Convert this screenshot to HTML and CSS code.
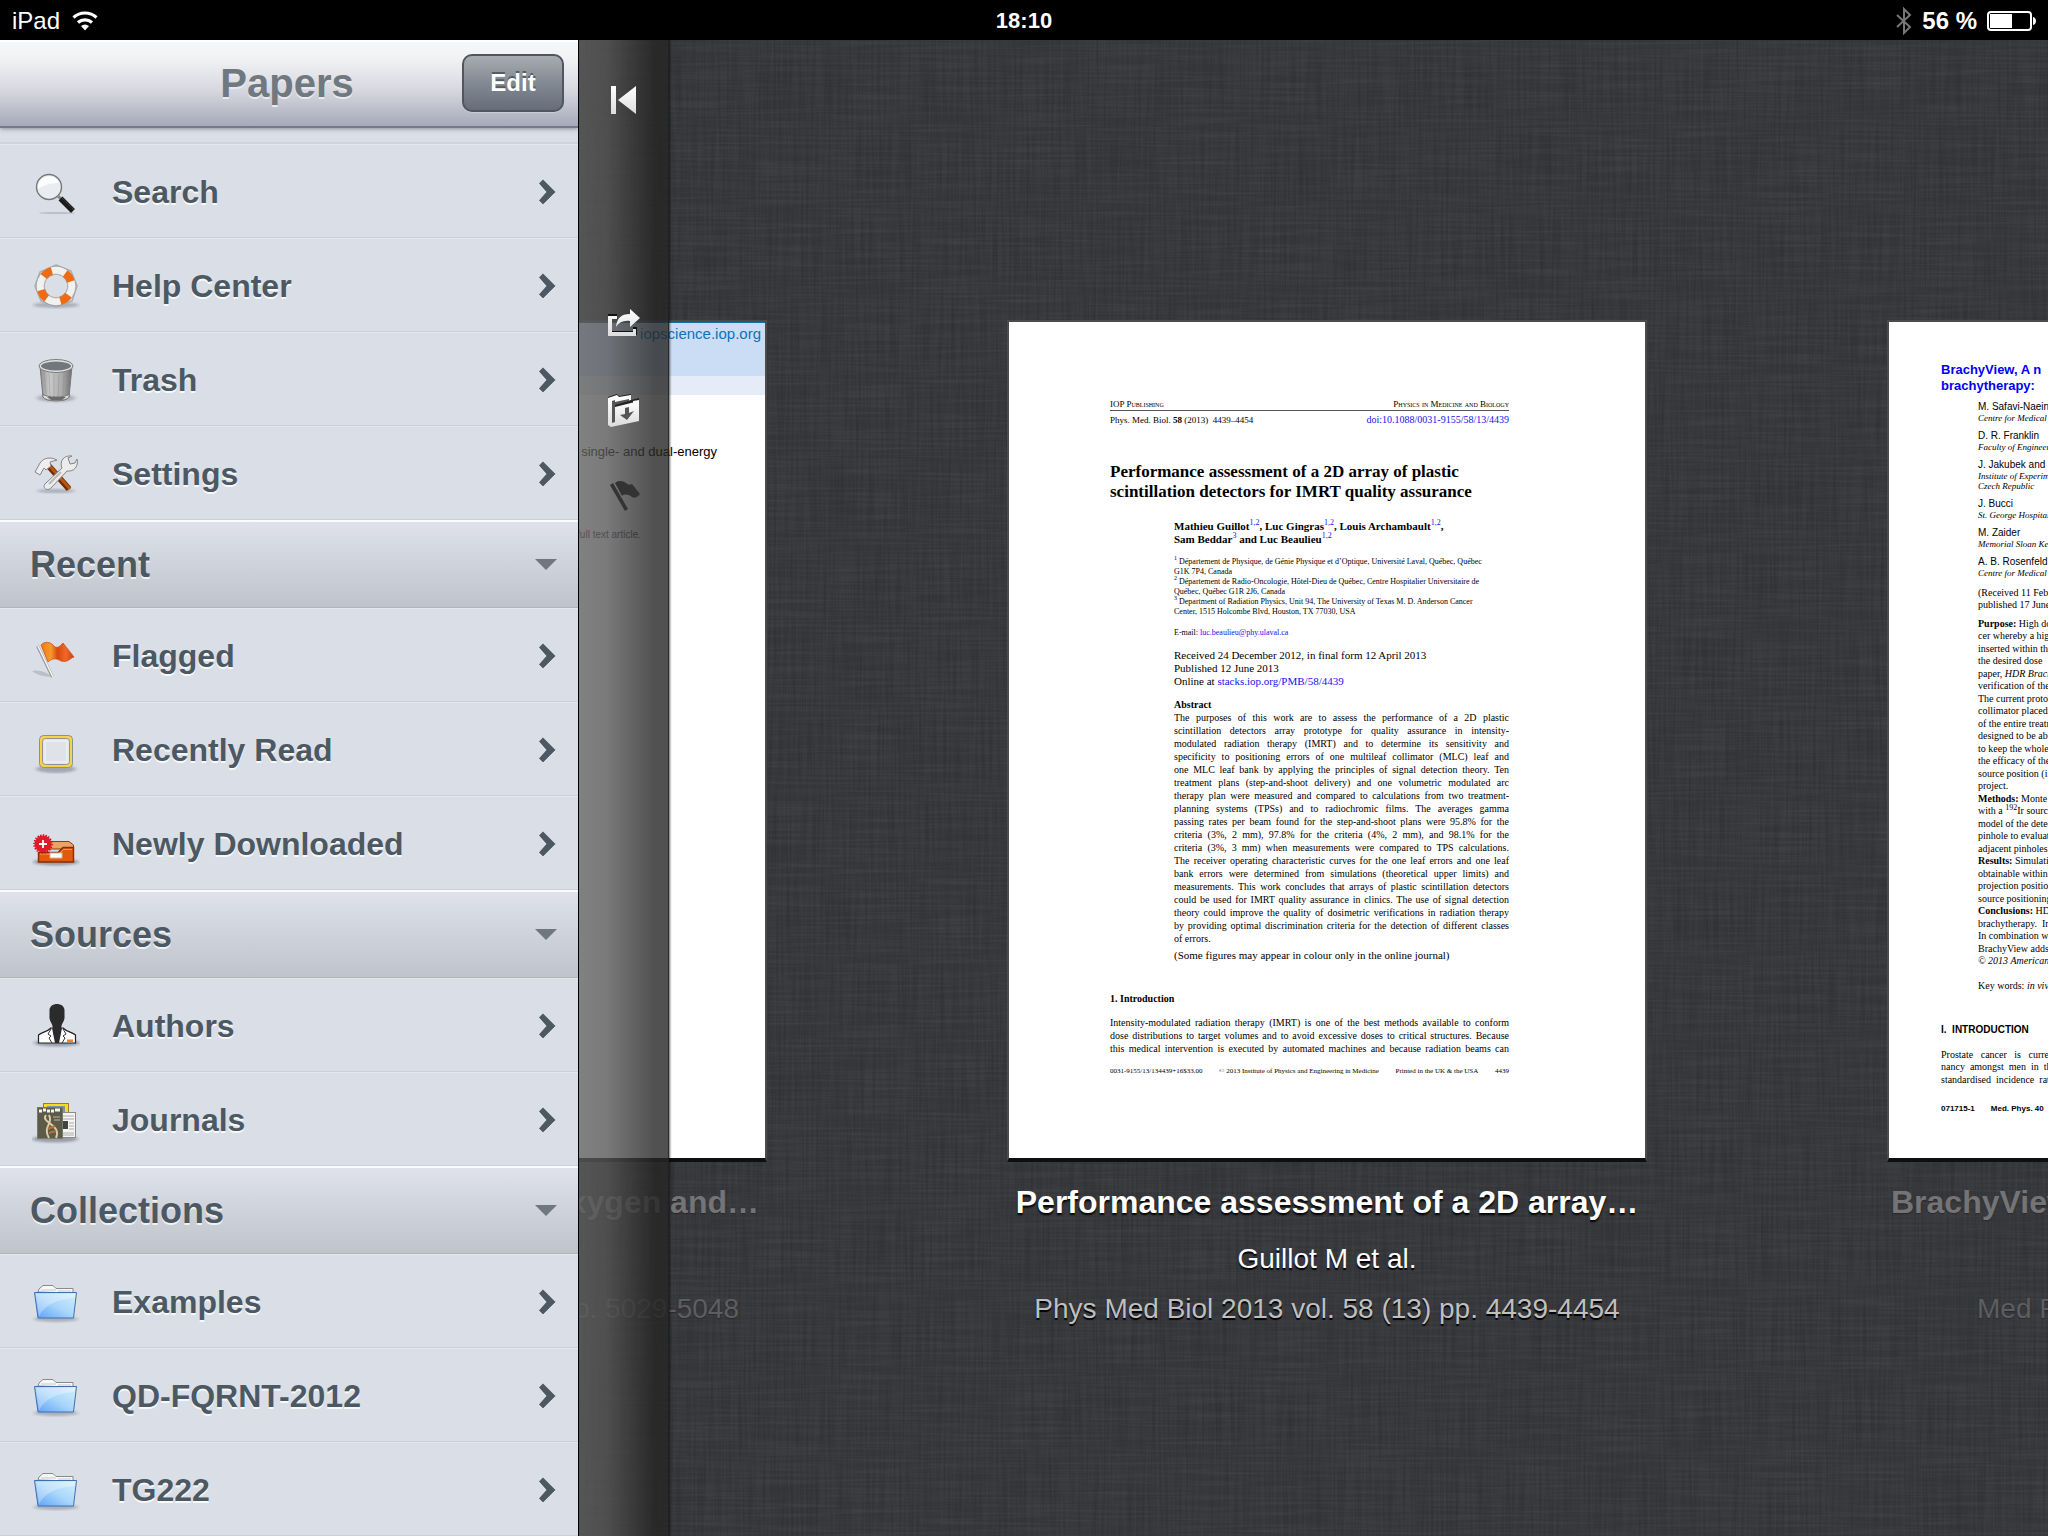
FILE: index.html
```html
<!DOCTYPE html>
<html lang="en">
<head>
  <meta charset="UTF-8" />
  <meta name="viewport" content="width=device-width, initial-scale=1.0" />
  <title>Papers</title>
  <link rel="stylesheet" href="styles.css">
</head>
<body>
  <!-- shared icon shapes and gradients -->
  <svg class="defs" width="0" height="0" aria-hidden="true">
    <defs>
      <filter id="blur"><feGaussianBlur stdDeviation="2 1" /></filter>
      <linearGradient id="metal" x1="0" x2="1" y1="0" y2="0">
        <stop offset="0" stop-color="#8e8e8e" /><stop offset="0.3" stop-color="#c9c9c9" />
        <stop offset="0.7" stop-color="#a9a9a9" /><stop offset="1" stop-color="#6e6e6e" />
      </linearGradient>
      <linearGradient id="flagFill" x1="0" x2="1" y1="0" y2="0">
        <stop offset="0" stop-color="#f07a10" /><stop offset="0.3" stop-color="#f79a2c" />
        <stop offset="0.5" stop-color="#d9480c" /><stop offset="0.75" stop-color="#f0682a" />
        <stop offset="1" stop-color="#c8400e" />
      </linearGradient>
      <linearGradient id="folderFill" x1="1" x2="0" y1="0" y2="1">
        <stop offset="0" stop-color="#d4f1fd" /><stop offset="0.5" stop-color="#a9d6fb" />
        <stop offset="1" stop-color="#5a9ff5" />
      </linearGradient>
      <linearGradient id="whiteFade" x1="0" x2="0" y1="0" y2="1">
        <stop offset="0" stop-color="#fff" /><stop offset="1" stop-color="#dcdcdc" />
      </linearGradient>
      <symbol id="chevron" viewBox="0 0 18 26">
        <path d="M1 4.5 5 0.5 17.5 13 5 25.5 1 21.5 8.5 13z" fill="#4c5862" />
      </symbol>
      <symbol id="folder" viewBox="0 0 48 48">
        <ellipse cx="24" cy="41" rx="22" ry="3" fill="#7d8290" opacity="0.5" filter="url(#blur)" />
        <path d="M6 14 7 11 11 7.500H21L24 10.500H41V15z" fill="#f8f8f6" stroke="#8a8a88" />
        <path d="M9 12h15M26 13h13" stroke="#c9c9c4" />
        <path d="M2.500 14.500H44.500L41.500 40H6z" fill="url(#folderFill)" stroke="#3f6fb0" />
        <path d="M4 16H43L42.500 20C28 21 14 25 7 38z" fill="#fff" opacity="0.3" />
      </symbol>
    </defs>
  </svg>

  <header class="status">
    <div class="status-left">
      <span>iPad</span>
      <svg width="26" height="22" viewBox="0 0 26 22" aria-hidden="true">
        <path d="M1.500 7.500A17 17 0 0 1 24.500 7.500" fill="none" stroke="#fff" stroke-width="3.200" />
        <path d="M6 12.500A10.500 10.500 0 0 1 20 12.500" fill="none" stroke="#fff" stroke-width="3.200" />
        <path d="M9 16A6 6 0 0 1 17 16L13 20.500z" fill="#fff" />
      </svg>
    </div>
    <time class="status-time">18:10</time>
    <div class="status-right">
      <svg width="16" height="28" viewBox="0 0 16 28" aria-hidden="true">
        <path d="M1 8 14 20 8 26V2L14 8 1 20" fill="none" stroke="#777" stroke-width="2" />
      </svg>
      <span>56 %</span>
      <svg width="49" height="20" viewBox="0 0 49 20" aria-hidden="true">
        <rect x="1" y="1" width="43" height="18" rx="3" fill="#000" stroke="#fff" stroke-width="2" />
        <rect x="3" y="3" width="22" height="14" fill="#fff" />
        <path d="M46 6c4 1 4 7 0 8z" fill="#fff" />
      </svg>
    </div>
  </header>

  <div class="app">
    <nav class="sidebar" aria-label="Library">
      <div class="toolbar">
        <h1>Papers</h1>
        <button class="edit" type="button">Edit</button>
      </div>
      <div class="peek"></div>

      <a class="row" href="#search">
        <svg class="icon" viewBox="0 0 48 48" aria-hidden="true">
          <ellipse cx="25" cy="45" rx="18" ry="1" fill="#8a8f9c" opacity="0.4" />
          <circle cx="17" cy="19" r="12.500" fill="#e9edf2" stroke="#777" stroke-width="1.400" />
          <path d="M6 21A11 11 0 0 1 27 15C20 15 12 17 6 21z" fill="#fff" opacity="0.8" />
          <path d="M26 28 29 31" stroke="#888" stroke-width="3" />
          <path d="M28.500 30.500 41 43" stroke="#1c1c1c" stroke-width="5.500" />
          <path d="M30 30 42 42" stroke="#555" stroke-dasharray="1 1" />
        </svg>
        <span>Search</span>
        <svg class="chevron" aria-hidden="true"><use href="#chevron" /></svg>
      </a>
      <a class="row" href="#help">
        <svg class="icon" viewBox="0 0 48 48" aria-hidden="true">
          <ellipse cx="24" cy="43" rx="23" ry="3" fill="#7d8290" opacity="0.5" filter="url(#blur)" />
          <path d="M24 3 39 9 45 24 40 39 24 45 9 39 3 24 8 10z" fill="none" stroke="#a9acb0" stroke-width="1.500" />
          <circle cx="24" cy="24" r="15.500" fill="none" stroke="#9b9b9b" stroke-width="8.500" />
          <circle cx="24" cy="24" r="15.500" fill="none" stroke="#f1f1ef" stroke-width="7.500" />
          <circle cx="24" cy="24" r="15.500" fill="none" stroke="#f06a12" stroke-width="8" stroke-dasharray="10 14.350" transform="rotate(-54 24 24)" />
          <circle cx="24" cy="24" r="12" fill="none" stroke="#999" opacity="0.5" />
        </svg>
        <span>Help Center</span>
        <svg class="chevron" aria-hidden="true"><use href="#chevron" /></svg>
      </a>
      <a class="row" href="#trash">
        <svg class="icon" viewBox="0 0 48 48" aria-hidden="true">
          <ellipse cx="24" cy="42" rx="19" ry="4" fill="#7d8290" opacity="0.5" filter="url(#blur)" />
          <path d="M8 10 11 41C13 46 35 46 37 41L40 10z" fill="url(#metal)" stroke="#777" />
          <path d="M12 14 14 38M17 17 18 40M22 18V41M27 18 26 41M32 17 31 40M36 14 34 38" stroke="#888" opacity="0.4" />
          <path d="M11 38C14 42 34 42 37 38L37 41C35 46 13 46 11 41z" fill="#dcdcdc" stroke="#777" />
          <path d="M15 41 19 44H30L34 41z" fill="#6b6b6b" />
          <ellipse cx="24" cy="10" rx="16" ry="5.500" fill="#74767d" stroke="#e2e2e2" stroke-width="2" />
          <ellipse cx="24" cy="10" rx="17" ry="6.500" fill="none" stroke="#7a7a7a" />
        </svg>
        <span>Trash</span>
        <svg class="chevron" aria-hidden="true"><use href="#chevron" /></svg>
      </a>
      <a class="row" href="#settings">
        <svg class="icon" viewBox="0 0 48 48" aria-hidden="true">
          <ellipse cx="24" cy="41" rx="19" ry="2" fill="#7d8290" opacity="0.5" filter="url(#blur)" />
          <path d="M15 14 37 39" stroke="#6d2c06" stroke-width="6" />
          <path d="M16 14 38 39" stroke="#b5570f" stroke-width="3" />
          <path d="M3 22 8 13C12 7 19 7 25 10L18 12 19 16 14 20 12 18 8 25z" fill="#eee" stroke="#858585" />
          <path d="M36 8 38 14 43 13 45 9C47 16 42 22 35 21L19 38C15 42 9 37 14 33L30 18C27 11 32 5 40 6z" fill="#ececec" stroke="#858585" />
          <path d="M17 34 29 22" stroke="#b9b9b9" stroke-width="2" />
        </svg>
        <span>Settings</span>
        <svg class="chevron" aria-hidden="true"><use href="#chevron" /></svg>
      </a>

      <h2><button class="section" type="button">Recent <svg width="22" height="11" viewBox="0 0 22 11" aria-hidden="true"><path d="M0 0H22L11 11z" fill="#6f7780" /></svg></button></h2>
      <a class="row" href="#flagged">
        <svg class="icon" viewBox="0 0 48 48" aria-hidden="true">
          <path d="M0 39C6 37 17 41 20 45 12 45 3 42 0 39z" fill="#9a9fab" opacity="0.5" />
          <path d="M5.500 14 20.500 45" stroke="#9a9a9a" stroke-width="3" />
          <path d="M6 14 21 45" stroke="#f4f4f4" stroke-width="1.600" />
          <path d="M9 13C13 9 18 10 21 13 25 18 28 14 31 11L42 25C38 26 36 31 29 29 24 26 20 26 16 30z" fill="url(#flagFill)" stroke="#c9541a" stroke-width="0.800" />
        </svg>
        <span>Flagged</span>
        <svg class="chevron" aria-hidden="true"><use href="#chevron" /></svg>
      </a>
      <a class="row" href="#read">
        <svg class="icon" viewBox="0 0 48 48" aria-hidden="true">
          <ellipse cx="24" cy="43" rx="20" ry="4" fill="#6d7280" opacity="0.5" filter="url(#blur)" />
          <rect x="7.500" y="9.500" width="33" height="32" rx="4" fill="#f3d548" stroke="#8f8f8f" />
          <rect x="10.500" y="12.500" width="27" height="26" rx="3" fill="#e2e5ea" stroke="#929292" />
          <rect x="13" y="15" width="22" height="21" fill="#dfe2e9" stroke="#f5f6f8" />
        </svg>
        <span>Recently Read</span>
        <svg class="chevron" aria-hidden="true"><use href="#chevron" /></svg>
      </a>
      <a class="row" href="#new">
        <svg class="icon" viewBox="0 0 48 48" aria-hidden="true">
          <ellipse cx="24" cy="42" rx="23" ry="3.500" fill="#6d7280" opacity="0.6" filter="url(#blur)" />
          <path d="M10 27 18 21.500H37L41.500 25V29H8z" fill="#e8a468" stroke="#8f3a08" />
          <path d="M6.500 32.500H26L31 27.500H41.500V42H6.500z" fill="#e2590b" stroke="#8a2c02" stroke-width="1.400" />
          <path d="M8 34H27L31.500 29.500H40" fill="none" stroke="#f59a52" />
          <rect x="18" y="33" width="12" height="5" fill="#fff" stroke="#d8b39a" />
          <circle cx="11" cy="24" r="8.500" fill="#e01a26" />
          <circle cx="11" cy="24" r="9" fill="none" stroke="#c40f1a" stroke-width="1.500" stroke-dasharray="1.400 1.400" />
          <path d="M11 20v8M7 24h8" stroke="#fff" stroke-width="1.800" />
        </svg>
        <span>Newly Downloaded</span>
        <svg class="chevron" aria-hidden="true"><use href="#chevron" /></svg>
      </a>

      <h2><button class="section" type="button">Sources <svg width="22" height="11" viewBox="0 0 22 11" aria-hidden="true"><path d="M0 0H22L11 11z" fill="#6f7780" /></svg></button></h2>
      <a class="row" href="#authors">
        <svg class="icon" viewBox="0 0 48 48" aria-hidden="true">
          <ellipse cx="25" cy="41" rx="23" ry="3.500" fill="#6d7280" opacity="0.6" filter="url(#blur)" />
          <path d="M6.500 41V33C10 30 15 30 19 26H31C35 30 40 30 43.500 33V41z" fill="#fdfdfd" stroke="#222" stroke-width="1.200" />
          <path d="M20 26 30 26 27 41H23z" fill="#2b2b2b" />
          <path d="M19 27 16 32 19 34 17 36 20 41M31 27 34 32 31 34 33 36 30 41" fill="none" stroke="#333" />
          <path d="M17.500 8C18 0 32 0 32.500 8V14C33 19 30 21 29.500 24L28 34H22L20.500 24C20 21 17 19 17.500 14z" fill="#2b2b2b" />
          <path d="M35 37.500h6V40h-6z" fill="#f58220" />
        </svg>
        <span>Authors</span>
        <svg class="chevron" aria-hidden="true"><use href="#chevron" /></svg>
      </a>
      <a class="row" href="#journals">
        <svg class="icon" viewBox="0 0 48 48" aria-hidden="true">
          <ellipse cx="23" cy="43" rx="23" ry="3.500" fill="#6d7280" opacity="0.6" filter="url(#blur)" />
          <rect x="11.500" y="7.500" width="25" height="30" fill="#ffd911" stroke="#8d7f43" />
          <rect x="15" y="10" width="18" height="20" fill="#7b95a8" />
          <rect x="28.500" y="16.500" width="15" height="25" fill="#f5f5f3" stroke="#8a8a8a" />
          <path d="M31 20h11M31 23h11M37 27h5M37 30h5M37 33h5M31 37h11M31 39h11" stroke="#aaa" />
          <rect x="31" y="25" width="5" height="8" fill="#444" />
          <rect x="5.500" y="11.500" width="25" height="31" fill="#5c5a48" stroke="#77776a" />
          <path d="M7 15h3M11 14h3M15 15h3M19 15h3M23 14h5" stroke="#f4f4ec" stroke-width="3" />
          <path d="M14 19C8 27 30 28 24 42M17 19C22 28 10 30 17 42" fill="none" stroke="#dccba6" stroke-width="2" />
          <path d="M16 33 23 30M17 37 24 35" stroke="#b5713f" stroke-width="2" />
          <path d="M21 21h7M22 24h6" stroke="#b8b9aa" />
        </svg>
        <span>Journals</span>
        <svg class="chevron" aria-hidden="true"><use href="#chevron" /></svg>
      </a>

      <h2><button class="section" type="button">Collections <svg width="22" height="11" viewBox="0 0 22 11" aria-hidden="true"><path d="M0 0H22L11 11z" fill="#6f7780" /></svg></button></h2>
      <a class="row" href="#examples">
        <svg class="icon" aria-hidden="true"><use href="#folder" /></svg>
        <span>Examples</span>
        <svg class="chevron" aria-hidden="true"><use href="#chevron" /></svg>
      </a>
      <a class="row" href="#qd">
        <svg class="icon" aria-hidden="true"><use href="#folder" /></svg>
        <span>QD-FQRNT-2012</span>
        <svg class="chevron" aria-hidden="true"><use href="#chevron" /></svg>
      </a>
      <a class="row" href="#tg222">
        <svg class="icon" aria-hidden="true"><use href="#folder" /></svg>
        <span>TG222</span>
        <svg class="chevron" aria-hidden="true"><use href="#chevron" /></svg>
      </a>
    </nav>

    <main class="stage">
      <!-- woven cloth behind the pages -->
      <svg class="linen" aria-hidden="true">
        <filter id="weaveX" x="0" y="0" width="100%" height="100%">
          <feTurbulence type="fractalNoise" baseFrequency="0.012 0.400" numOctaves="2" seed="3" />
          <feColorMatrix values="0 0 0 0 1  0 0 0 0 1  0 0 0 0 1  0.500 0 0 0 -0.180" />
        </filter>
        <filter id="weaveY" x="0" y="0" width="100%" height="100%">
          <feTurbulence type="fractalNoise" baseFrequency="0.400 0.012" numOctaves="2" seed="8" />
          <feColorMatrix values="0 0 0 0 0  0 0 0 0 0  0 0 0 0 0  1 0 0 0 -0.360" />
        </filter>
        <rect width="100%" height="100%" filter="url(#weaveX)" opacity="0.180" />
        <rect width="100%" height="100%" filter="url(#weaveY)" opacity="0.260" />
      </svg>

      <div class="track">
        <article class="card card-prev">
          <div class="page page-iop">
            <div class="iop-band">iopscience.iop.org</div>
            <div class="iop-strip"></div>
            <p class="iop-topic">single- and dual-energy</p>
            <p class="iop-note">full text article.</p>
          </div>
          <h3>oxygen and…</h3>
          <p class="author">&nbsp;</p>
          <p class="ref">pp. 5029-5048</p>
        </article>

        <article class="card">
          <div class="page page-main">
            <div class="running"><span>IOP Publishing</span><span>Physics in Medicine and Biology</span></div>
            <div class="cite"><span>Phys. Med. Biol. <b>58</b> (2013)&nbsp; 4439–4454</span><a href="#doi">doi:10.1088/0031-9155/58/13/4439</a></div>
            <h4>Performance assessment of a 2D array of plastic<br>scintillation detectors for IMRT quality assurance</h4>
            <div class="inset">
              <p class="names">Mathieu Guillot<sup>1,2</sup>, Luc Gingras<sup>1,2</sup>, Louis Archambault<sup>1,2</sup>,<br>Sam Beddar<sup>3</sup> and Luc Beaulieu<sup>1,2</sup></p>
              <p class="affil"><sup>1</sup> Département de Physique, de Génie Physique et d’Optique, Université Laval, Québec, Québec<br>G1K 7P4, Canada<br>
                <sup>2</sup> Département de Radio-Oncologie, Hôtel-Dieu de Québec, Centre Hospitalier Universitaire de<br>Québec, Québec G1R 2J6, Canada<br>
                <sup>3</sup> Department of Radiation Physics, Unit 94, The University of Texas M. D. Anderson Cancer<br>Center, 1515 Holcombe Blvd, Houston, TX 77030, USA</p>
              <p class="email">E-mail: <a href="#mail">luc.beaulieu@phy.ulaval.ca</a></p>
              <p class="dates">Received 24 December 2012, in final form 12 April 2013<br>Published 12 June 2013<br>Online at <a href="#stacks">stacks.iop.org/PMB/58/4439</a></p>
              <h5>Abstract</h5>
              <p class="just">The purposes of this work are to assess the performance of a 2D plastic<br>
                scintillation detectors array prototype for quality assurance in intensity-<br>
                modulated radiation therapy (IMRT) and to determine its sensitivity and<br>
                specificity to positioning errors of one multileaf collimator (MLC) leaf and<br>
                one MLC leaf bank by applying the principles of signal detection theory. Ten<br>
                treatment plans (step-and-shoot delivery) and one volumetric modulated arc<br>
                therapy plan were measured and compared to calculations from two treatment-<br>
                planning systems (TPSs) and to radiochromic films. The averages gamma<br>
                passing rates per beam found for the step-and-shoot plans were 95.8% for the<br>
                criteria (3%, 2 mm), 97.8% for the criteria (4%, 2 mm), and 98.1% for the<br>
                criteria (3%, 3 mm) when measurements were compared to TPS calculations.<br>
                The receiver operating characteristic curves for the one leaf errors and one leaf<br>
                bank errors were determined from simulations (theoretical upper limits) and<br>
                measurements. This work concludes that arrays of plastic scintillation detectors<br>
                could be used for IMRT quality assurance in clinics. The use of signal detection<br>
                theory could improve the quality of dosimetric verifications in radiation therapy<br>
                by providing optimal discrimination criteria for the detection of different classes</p>
              <p>of errors.</p>
              <p class="figs">(Some figures may appear in colour only in the online journal)</p>
            </div>
            <h5 class="intro">1. Introduction</h5>
            <p class="just">Intensity-modulated radiation therapy (IMRT) is one of the best methods available to conform<br>
              dose distributions to target volumes and to avoid excessive doses to critical structures. Because<br>
              this medical intervention is executed by automated machines and because radiation beams can</p>
            <div class="imprint"><span>0031-9155/13/134439+16$33.00</span><span>© 2013 Institute of Physics and Engineering in Medicine</span><span>Printed in the UK &amp; the USA</span><span>4439</span></div>
          </div>
          <h3>Performance assessment of a 2D array…</h3>
          <p class="author">Guillot M et al.</p>
          <p class="ref">Phys Med Biol 2013 vol. 58 (13) pp. 4439-4454</p>
        </article>

        <article class="card card-next">
          <div class="page page-brachy">
            <h4>BrachyView, A n<br>brachytherapy:</h4>
            <div class="inset">
              <dl>
                <dt>M. Safavi-Naeini</dt><dd>Centre for Medical</dd>
                <dt>D. R. Franklin</dt><dd>Faculty of Engineering</dd>
                <dt>J. Jakubek and</dt><dd>Institute of Experimental</dd><dd>Czech Republic</dd>
                <dt>J. Bucci</dt><dd>St. George Hospital</dd>
                <dt>M. Zaider</dt><dd>Memorial Sloan Kettering</dd>
                <dt>A. B. Rosenfeld</dt><dd>Centre for Medical</dd>
              </dl>
              <div class="lines received"><div>(Received 11 Feb</div><div>published 17 June</div></div>
              <div class="lines">
                <div><b>Purpose:</b> High dose</div>
                <div>cer whereby a high</div>
                <div>inserted within the</div>
                <div>the desired dose</div>
                <div>paper, <i>HDR Brachy</i></div>
                <div>verification of the</div>
                <div>The current prototype</div>
                <div>collimator placed</div>
                <div>of the entire treatment</div>
                <div>designed to be able</div>
                <div>to keep the whole</div>
                <div>the efficacy of the</div>
                <div>source position (i</div>
                <div>project.</div>
                <div><b>Methods:</b> Monte</div>
                <div>with a <sup>192</sup>Ir source</div>
                <div>model of the detector</div>
                <div>pinhole to evaluate</div>
                <div>adjacent pinholes</div>
                <div><b>Results:</b> Simulation</div>
                <div>obtainable within</div>
                <div>projection position</div>
                <div>source positioning</div>
                <div><b>Conclusions:</b> HDR</div>
                <div>brachytherapy.&nbsp; In</div>
                <div>In combination with</div>
                <div>BrachyView adds</div>
                <div><i>© 2013 American</i></div>
              </div>
              <p class="keys">Key words: <i>in vivo</i></p>
            </div>
            <h5>I.&nbsp; INTRODUCTION</h5>
            <div class="lines">
              <div>Prostate&nbsp;&nbsp; cancer&nbsp;&nbsp; is&nbsp;&nbsp; currently</div>
              <div>nancy&nbsp; amongst&nbsp; men&nbsp; in&nbsp; the</div>
              <div>standardised&nbsp; incidence&nbsp; rate</div>
            </div>
            <p class="folio"><span>071715-1</span><span>Med. Phys. 40</span></p>
          </div>
          <h3>BrachyView</h3>
          <p class="author">&nbsp;</p>
          <p class="ref">Med Phys</p>
        </article>
      </div>

      <div class="rail">
        <button type="button" aria-label="Back to start">
          <svg width="32" height="32" viewBox="0 0 32 32"><path d="M3 2H8V30H3zM28 2V30L10 16z" fill="url(#whiteFade)" /></svg>
        </button>
        <div class="rail-tools">
          <button type="button" aria-label="Share">
            <svg width="32" height="32" viewBox="0 0 32 32"><path d="M0 7H9V10H4V24H25V20H29V28H0z" fill="#111" /><path d="M0 9H9V12H4V25H25V22H28V29H0zM8 20C9 11 13 7 22 7V2L32 11 22 20V14C16 13 11 15 8 20z" fill="url(#whiteFade)" /></svg>
          </button>
          <button type="button" aria-label="Add to collection">
            <svg width="32" height="34" viewBox="0 0 32 34"><path d="M0 4 9 1 11 3 23 1V7L31 5V26L3 33 0 31z" fill="#222" /><path d="M0 5 9 2 11 4 23 2V7L7 11V8L4 8V29L7 28V15L25 10 25 8 31 7V28L3 34 0 32z" fill="url(#whiteFade)" /><path d="M7 14 31 8V27L7 32z" fill="url(#whiteFade)" /><path d="M17 15 21 14V20L26 18 19 27 12 22 17 21zM4 8 7 7V29L4 30zM7 9 21 6V8L7 12z" fill="#555" /></svg>
          </button>
          <button type="button" aria-label="Flag">
            <svg width="32" height="32" viewBox="0 0 32 32"><path d="M2 4 5 2 20 28 17 30z" fill="#333" /><path d="M7 2C11 -1 15 0 18 2 20 4 22 4 24 3L32 13C30 16 26 18 24 16 20 13 16 13 14 15z" fill="#333" /></svg>
          </button>
        </div>
      </div>
    </main>
  </div>
</body>
</html>
```
FILE: styles.css
```css
* {
  box-sizing: border-box;
}
body {
  margin: 0;
  height: 100vh;
  display: flex;
  flex-direction: column;
  overflow: hidden;
  background-color: #000;
  font-family: "Liberation Sans", Arial, sans-serif;
}
h1, h2, h3, h4, h5, p, dl, dd {
  margin: 0;
}
a {
  text-decoration: none;
}
button {
  border: none;
  padding: 0;
  font-family: inherit;
  cursor: pointer;
}
.defs {
  position: absolute;
}

/* status bar */
.status {
  display: grid;
  grid-template-columns: 1fr auto 1fr;
  align-items: center;
  height: 40px;
  padding: 2px 12px 0;
  color: #fff;
  font-size: 24px;
}
.status-left, .status-right {
  display: flex;
  align-items: center;
  gap: 12px;
}
.status-right {
  justify-content: flex-end;
  gap: 10px;
}
.status-time {
  font-size: 22px;
  font-weight: bold;
}
.status-right span {
  font-weight: bold;
}

.app {
  flex: 1;
  display: flex;
  min-height: 0;
}

/* sidebar */
.sidebar {
  width: 579px;
  flex-shrink: 0;
  border-right: 1px solid #000;
  background-color: #dadee7;
  overflow: hidden;
}
.toolbar {
  position: relative;
  display: flex;
  align-items: center;
  justify-content: center;
  height: 88px;
  padding: 0 4px 2px 0;
  border-top: 2px solid #fff;
  border-bottom: 2px solid #74798a;
  background: linear-gradient(#f6f7f8, #f1f2f4 20%, #d9dae1 55%, #a6a9b9);
  box-shadow: 0 1px 4px rgba(60, 65, 80, 0.5);
}
.toolbar h1 {
  font-size: 40px;
  line-height: 48px;
  color: #707880;
  text-shadow: 0 2px 0 #e9eaee;
}
.edit {
  position: absolute;
  right: 14px;
  width: 102px;
  height: 58px;
  border: 2px solid #4f565f;
  border-radius: 10px;
  background: linear-gradient(#a9acb2, #868c95 45%, #666d79);
  box-shadow: 0 1px 0 #c9ccd6;
  color: #fff;
  font-size: 24px;
  font-weight: bold;
  text-shadow: 0 -2px 0 #555c66;
}
.peek {
  height: 16px;
  border-bottom: 2px solid #cfd3db;
}
.row {
  display: flex;
  align-items: center;
  gap: 32px;
  height: 94px;
  padding: 2px 22px 0 32px;
  border-top: 1px solid #e4e7ed;
  border-bottom: 1px solid #cbcfd7;
  color: #4c5862;
  font-size: 32px;
  font-weight: bold;
  text-shadow: 0 2px 0 #f7f8fa;
}
.row span {
  flex: 1;
}
.icon {
  width: 48px;
  height: 48px;
}
.chevron {
  width: 18px;
  height: 26px;
  filter: drop-shadow(0 1px 0 #eef0f4);
}
.section {
  display: flex;
  align-items: center;
  justify-content: space-between;
  width: 100%;
  height: 88px;
  padding: 0 21px 0 30px;
  border-top: 2px solid #fafbfc;
  border-bottom: 1px solid #b1b5bb;
  background: linear-gradient(#dfe2ea, #bfc3cb);
  color: #4c5862;
  font-size: 36px;
  font-weight: bold;
  text-shadow: 0 2px 0 #eff1f4;
}

/* cover flow */
.stage {
  position: relative;
  flex: 1;
  min-width: 0;
  overflow: hidden;
  background-color: #38393d;
}
.linen {
  position: absolute;
  width: 100%;
  height: 100%;
}
.track {
  position: relative;
  display: flex;
  justify-content: center;
  gap: 240px;
  padding: 280px 0 0 27px;
}
.card {
  flex: 0 0 640px;
  text-align: center;
}
.page {
  height: 842px;
  overflow: hidden;
  border: 2px solid #4b4b4b;
  border-bottom: 4px solid #0f0f0f;
  background-color: #fff;
  color: #000;
  text-align: left;
  white-space: nowrap;
}
.card h3 {
  margin-top: 20px;
  font-size: 32px;
  line-height: 40px;
  color: #fff;
  text-shadow: 0 2px 2px #000;
  white-space: nowrap;
}
.author, .ref {
  font-size: 28px;
  line-height: 32px;
  text-shadow: 0 2px 1px #000;
}
.author {
  margin-top: 21px;
  color: #fff;
}
.ref {
  margin-top: 18px;
  color: #bfbfbf;
}
.card-prev h3, .card-next h3 {
  color: #747477;
  text-shadow: 0 1px 1px #2a2a2c;
}
.card-prev .ref, .card-next .ref {
  color: #5d5e61;
  text-shadow: 0 1px 1px #2a2a2c;
}
.card-prev {
  text-align: right;
}
.card-prev h3 {
  padding-right: 8px;
}
.card-prev .ref {
  padding-right: 28px;
}
.card-next {
  text-align: left;
}
.card-next h3 {
  padding-left: 4px;
}
.card-next .ref {
  padding-left: 90px;
}

/* left page */
.page-iop {
  text-align: right;
}
.iop-band {
  height: 54px;
  padding: 1px 4px;
  border-top: 1px solid #0d6fb2;
  background-color: #cbdcf5;
  color: #0d73b4;
  font-size: 15px;
  line-height: 20px;
}
.iop-strip {
  height: 19px;
  background-color: #e5ecf7;
}
.iop-topic {
  margin-top: 50px;
  padding-right: 48px;
  font-size: 13px;
  line-height: 14px;
}
.iop-note {
  margin-top: 69px;
  padding-right: 124px;
  color: #333;
  font-size: 10px;
  line-height: 14px;
}

/* centre page */
.page-main {
  padding: 76px 136px 0 101px;
  font-family: "Liberation Serif", "Times New Roman", serif;
  font-size: 10px;
  line-height: 13px;
}
.page a, .names sup {
  color: #1414ee;
}
.running, .cite, .imprint {
  display: flex;
  justify-content: space-between;
}
.running {
  border-bottom: 1px solid #555;
  font-size: 9px;
  line-height: 12px;
  font-variant: small-caps;
}
.cite {
  margin-top: 3px;
  font-size: 9px;
  line-height: 12px;
}
.cite a {
  font-size: 10px;
}
.page-main h4 {
  margin-top: 36px;
  font-size: 17px;
  line-height: 20px;
}
.page-main .inset {
  padding-left: 64px;
}
.page sup {
  font-size: 8px;
  line-height: 0;
  font-weight: normal;
}
.names {
  margin-top: 18px;
  font-size: 11px;
  font-weight: bold;
}
.affil {
  margin-top: 11px;
  font-size: 8px;
  line-height: 10px;
}
.affil sup {
  font-size: 6px;
}
.email {
  margin-top: 10px;
  font-size: 8px;
  line-height: 12px;
}
.dates {
  margin-top: 10px;
  font-size: 11px;
}
.page-main h5 {
  margin-top: 10px;
  font-size: 10px;
}
.just {
  text-align: justify;
  text-align-last: justify;
}
.figs {
  margin-top: 4px;
  font-size: 11px;
}
.page-main .intro {
  margin-top: 30px;
  margin-bottom: 11px;
}
.imprint {
  margin-top: 10px;
  font-size: 7px;
}

/* right page */
.page-brachy {
  padding: 40px 0 0 52px;
  font-family: "Liberation Serif", "Times New Roman", serif;
  font-size: 10px;
}
.page-brachy h4 {
  color: #0000f5;
  font-family: "Liberation Sans", Arial, sans-serif;
  font-size: 13px;
  line-height: 16px;
}
.page-brachy .inset {
  padding-left: 37px;
}
.page-brachy dt {
  margin-top: 7px;
  font-family: "Liberation Sans", Arial, sans-serif;
  font-size: 10px;
  line-height: 12px;
}
.page-brachy dd {
  font-size: 9px;
  font-style: italic;
  line-height: 10px;
}
.lines div:nth-child(odd) {
  line-height: 13px;
}
.lines div:nth-child(even) {
  line-height: 12px;
}
.received {
  margin-top: 8px;
  margin-bottom: 6px;
}
.keys {
  margin-top: 12px;
  line-height: 14px;
}
.page-brachy h5 {
  margin-top: 30px;
  margin-bottom: 11px;
  font-family: "Liberation Sans", Arial, sans-serif;
  font-size: 10px;
  line-height: 14px;
}
.folio {
  display: flex;
  gap: 16px;
  margin-top: 16px;
  font-family: "Liberation Sans", Arial, sans-serif;
  font-size: 8px;
  font-weight: bold;
  line-height: 14px;
}

/* translucent tool rail over the stage */
.rail {
  position: absolute;
  top: 0;
  bottom: 0;
  left: 0;
  width: 90px;
  padding-top: 16px;
  border-right: 1px solid rgba(20, 20, 20, 0.8);
  background: linear-gradient(90deg, rgba(93, 93, 93, 0.78), rgba(85, 85, 85, 0.78) 30%, rgba(37, 37, 37, 0.8) 85%);
  box-shadow: 1px 0 2px rgba(0, 0, 0, 0.6);
}
.rail button {
  display: flex;
  align-items: center;
  justify-content: center;
  width: 89px;
  height: 87px;
  background: none;
}
.rail-tools {
  margin-top: 136px;
}
```
